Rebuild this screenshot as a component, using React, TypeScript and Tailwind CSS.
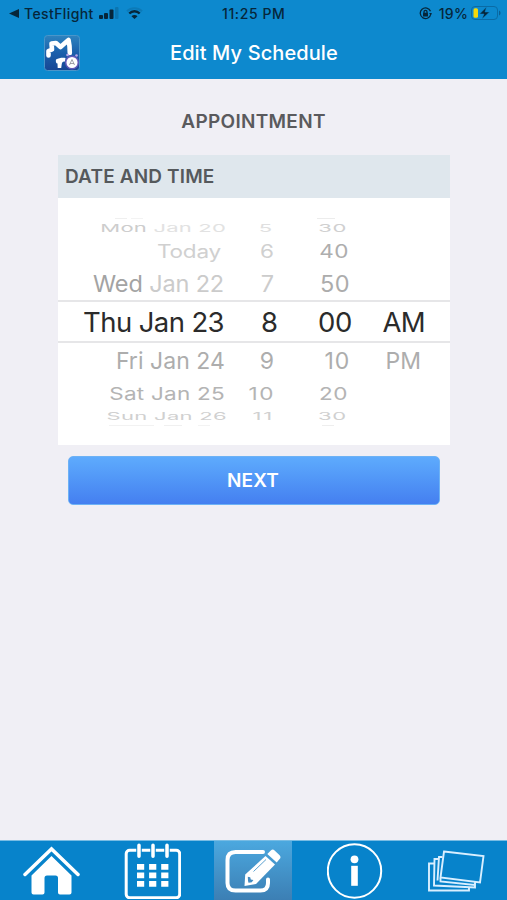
import clsx from 'clsx';
import type { ReactNode } from 'react';

interface WheelRow {
  day: ReactNode;
  hour: string;
  minute: string;
  period?: string;
  row: string;
  dayClass: string;
  hourClass: string;
  minuteClass: string;
  periodClass?: string;
}

// The wheel flattens and fades towards its top and bottom edges
const ROWS: WheelRow[] = [
  {
    day: <>Mon <span className="text-[#e2e2e2]">Jan 20</span></>,
    hour: '5',
    minute: '30',
    row: 'h-4 text-[22px]',
    dayClass: 'text-[#cdcdcd] scale-y-[0.5] mr-[-2px] tracking-[0.2px]',
    hourClass: 'text-[#e0e0e0] scale-y-[0.5] mr-[6px]',
    minuteClass: 'text-[#d0d0d0] scale-y-[0.5] mr-[6px] tracking-[0.6px]',
  },
  {
    day: 'Today',
    hour: '6',
    minute: '40',
    row: 'h-[29px] pt-[3px] text-[22.5px]',
    dayClass: 'text-[#d0d0d0] scale-y-[0.8] mr-[3px] tracking-[-0.2px]',
    hourClass: 'text-[#d0d0d0] scale-y-[0.8] mr-[4px]',
    minuteClass: 'text-[#aeaeae] scale-y-[0.8] mr-[4px] tracking-[0.5px]',
  },
  {
    day: <>Wed <span className="text-[#cbcbcb]">Jan 22</span></>,
    hour: '7',
    minute: '50',
    row: 'h-9 pt-[2px] text-[23.5px]',
    dayClass: 'text-[#a3a3a3] scale-y-[0.96] tracking-[-0.15px]',
    hourClass: 'text-[#cccccc] scale-y-[0.96] mr-[4px]',
    minuteClass: 'text-[#acacac] scale-y-[0.96] mr-[3px] tracking-[0.5px]',
  },
  {
    day: 'Thu Jan 23',
    hour: '8',
    minute: '00',
    period: 'AM',
    row: 'h-[42px] pt-px text-[27.5px] text-[#2b2b2b]',
    dayClass: 'tracking-[-0.6px]',
    hourClass: '',
    minuteClass: 'tracking-[-0.3px] mr-px',
    periodClass: 'tracking-[-0.6px] mr-px',
  },
  {
    day: 'Fri Jan 24',
    hour: '9',
    minute: '10',
    period: 'PM',
    row: 'h-[35px] pt-[2px] text-[23px] text-[#adadad]',
    dayClass: 'mr-[-1px] tracking-[0.05px]',
    hourClass: 'mr-[4px]',
    minuteClass: 'mr-[3px] tracking-[0.8px]',
    periodClass: 'mr-[5px]',
  },
  {
    day: 'Sat Jan 25',
    hour: '10',
    minute: '20',
    row: 'h-[30px] pt-[2px] text-[22.5px] text-[#b4b4b4]',
    dayClass: 'scale-y-[0.78] tracking-[0.25px] mr-[-1px]',
    hourClass: 'scale-y-[0.78] mr-[3px] tracking-[1.6px]',
    minuteClass: 'scale-y-[0.78] mr-[5px] tracking-[0.5px]',
  },
  {
    day: 'Sun Jan 26',
    hour: '11',
    minute: '30',
    row: 'h-4 text-[22px] text-[#d0d0d0]',
    dayClass: 'scale-y-[0.48] mr-[-3px] tracking-[0.3px]',
    hourClass: 'scale-y-[0.48] mr-[4px] tracking-[1.8px]',
    minuteClass: 'scale-y-[0.48] mr-[6px] tracking-[0.8px]',
  },
];

const cell = 'inline-block whitespace-nowrap';

function PickerRow({ item }: { item: WheelRow }) {
  return (
    <div className={clsx('flex items-center leading-none', item.row)}>
      <div className="flex w-[166px] shrink-0 justify-end">
        <span className={clsx(cell, item.dayClass)}>{item.day}</span>
      </div>
      <div className="flex w-[54px] shrink-0 justify-end">
        <span className={clsx(cell, item.hourClass)}>{item.hour}</span>
      </div>
      <div className="flex w-[75px] shrink-0 justify-end">
        <span className={clsx(cell, item.minuteClass)}>{item.minute}</span>
      </div>
      <div className="flex w-[73px] shrink-0 justify-end">
        <span className={clsx(cell, item.periodClass)}>{item.period}</span>
      </div>
    </div>
  );
}

function DateTimePicker() {
  return (
    <div className="relative h-[247px] bg-white font-normal">
      {/* slivers of the rows that roll out of sight */}
      <div className="flex h-[22px] items-end pb-px">
        <span className="ml-[57px] h-px w-3 bg-[#efefef]" />
        <span className="ml-1 h-px w-3 bg-[#f3f3f3]" />
        <span className="ml-[174px] h-px w-[18px] bg-[#ececec]" />
      </div>
      {ROWS.map((item) => (
        <PickerRow key={item.hour} item={item} />
      ))}
      <div className="flex h-[3px] items-center">
        <span className="ml-[51px] h-px w-[45px] bg-[#f2f2f2]" />
        <span className="ml-[10px] h-px w-[18px] bg-[#f0f0f0]" />
        <span className="ml-[16px] h-px w-3 bg-[#f3f3f3]" />
        <span className="ml-[112px] h-px w-3 bg-[#eeeeee]" />
      </div>
      <div className="pointer-events-none absolute inset-x-0 top-[102px] h-[43px] border-y-2 border-[#e6e6e8]" />
    </div>
  );
}

function StatusBar() {
  return (
    <div className="flex h-[26px] items-center text-[14px] font-medium text-[#06263a]">
      <div className="flex w-[222px] items-center pl-[9px]">
        <svg className="h-[9px] w-[10px]" viewBox="0 0 10 9" fill="currentColor">
          <path d="M0 4.5 10 0v9z" />
        </svg>
        <span className="ml-[5px] w-[70px] tracking-[0.4px]">TestFlight</span>
        <svg className="ml-[5px] h-3 w-[21px]" viewBox="0 0 21 12" fill="currentColor">
          <rect x="0" y="8" width="4" height="4" rx="1" />
          <rect x="5" y="6" width="4" height="6" rx="1" />
          <rect x="10.500" y="2.500" width="4" height="9.500" rx="1" />
          <rect x="16" y="0" width="3.500" height="12" rx="1" opacity="0.2" />
        </svg>
        <svg className="ml-[6px] h-3 w-[17px]" viewBox="0 0 17 12" fill="none" stroke="currentColor" strokeWidth="2">
          <path d="M1 4.200a10.800 10.800 0 0 1 15 0" opacity="0.15" />
          <path d="M3.300 6.500a7.200 7.200 0 0 1 10.400 0" strokeWidth="2.400" />
          <path d="M8.500 12 5.500 9.200a4.200 4.200 0 0 1 6 0z" fill="currentColor" stroke="none" />
        </svg>
      </div>
      <span className="w-[66px] whitespace-nowrap tracking-[0.6px]">11:25 PM</span>
      <div className="ml-auto flex items-center pr-[6px]">
        <svg className="h-[13px] w-[13px]" viewBox="0 0 13 13" fill="none" stroke="currentColor" strokeWidth="1.300">
          <path d="M11.500 4.300A5.300 5.300 0 1 0 11.800 7" />
          <path d="m10 6 1.800 2L13 6z" fill="currentColor" stroke="none" />
          <rect x="4" y="5.800" width="5" height="3.600" rx="0.500" fill="currentColor" stroke="none" />
          <path d="M5 6V4.800a1.500 1.500 0 0 1 3 0V6" />
        </svg>
        <span className="ml-[7px] tracking-[0.2px]">19%</span>
        <svg className="ml-[3px] h-[14px] w-[30px]" viewBox="0 0 30 14">
          <rect x="0.500" y="0.500" width="26" height="13" rx="3.500" fill="none" stroke="#0a6ba5" />
          <path d="M28 4.500c2 .8 2 4.200 0 5z" fill="#0a5f94" />
          <rect x="2.500" y="2.200" width="4.500" height="9.600" rx="1.500" fill="#f5d90a" />
          <path d="M15.500 1 8.500 8h4.500l-2 5L18.500 6h-4.500z" fill="#06263a" stroke="#0d87cc" strokeWidth="0.500" />
        </svg>
      </div>
    </div>
  );
}

function AppLogo() {
  return (
    <svg className="h-9 w-9" viewBox="0 0 36 36">
      <defs>
        <linearGradient id="logo" x1="0" y1="0" x2="0" y2="1">
          <stop offset="0" stopColor="#2d83bf" />
          <stop offset="0.5" stopColor="#1a5fab" />
          <stop offset="1" stopColor="#174694" />
        </linearGradient>
      </defs>
      <rect x="0.500" y="0.500" width="35" height="35" rx="3" fill="url(#logo)" stroke="#4a95c9" />
      <path
        d="M4.500 20.500v-4.500l3.500-1.500-.5-6 4.500-.5 4.500 4 4.500-4 3.500-3 1 6 .3 7"
        fill="none"
        stroke="#fff"
        strokeWidth="4.600"
        strokeLinejoin="round"
        strokeLinecap="round"
      />
      <path d="M12 24.500c3-1.500 6-2 9.500-1.500l-.5 3.500c-2-.5-3 .5-3.300 3l-.5 3.500h-3.500l-.2-4.500c-1.500 0-2-2-1.500-4z" fill="#fff" />
      <circle cx="23.500" cy="20" r="1.300" fill="#b9a5ea" />
      <circle cx="32.500" cy="20.500" r="1.300" fill="#b9a5ea" />
      <circle cx="28" cy="27.500" r="6.300" fill="#fff" stroke="#6259b8" strokeWidth="1.500" />
      <path d="m25.500 30 2.500-5.500 2.500 5.500M26 28.500h4" fill="none" stroke="#8b8b95" strokeWidth="0.800" />
    </svg>
  );
}

function HomeIcon() {
  return (
    <svg className="h-[50px] w-[58px]" viewBox="0 0 58 50" fill="#fff">
      <path d="M3 28.500 29.500 3 56 28.500" fill="none" stroke="#fff" strokeWidth="3.500" strokeLinecap="round" />
      <path d="M29.500 10 9.500 29.500V46.500q0 2 2 2h9q2 0 2-2V32q0-2.500 2.500-2.500h8.500q2.500 0 2.500 2.500v14.500q0 2 2 2h9.500q2 0 2-2v-17z" />
    </svg>
  );
}

function CalendarIcon() {
  return (
    <svg className="h-14 w-[57px]" viewBox="0 0 57 56" fill="none" stroke="#fff">
      <rect x="2.200" y="7.300" width="53.500" height="47.500" rx="3.500" strokeWidth="3" />
      <path d="M15 1.500v12M29 1.500v12M43 1.500v12" stroke="#0783cb" strokeWidth="5.500" />
      <path d="M15 2.300v11M29 2.300v11M43 2.300v11" strokeWidth="3.500" strokeLinecap="round" />
      <path d="M13 23.800h7.200m4.900 0h7.200m4.900 0h7.200M13 32.300h7.200m4.900 0h7.200m4.900 0h7.200M13 40.800h7.200m4.900 0h7.200m4.900 0h7.200" strokeWidth="5.700" />
    </svg>
  );
}

function EditIcon() {
  return (
    <svg className="h-[46px] w-[56px]" viewBox="0 0 56 46">
      <path
        d="M38 4H10.500Q2.500 4 2.500 12v23q0 7.500 8 7.500h25q7.500 0 7.500-7.500V31.500"
        fill="none"
        stroke="#fff"
        strokeWidth="4"
        strokeLinecap="round"
      />
      <path d="m40.500 8 9.500 8.500L31 36l-11.500 2 .7-11.500z" fill="#fff" />
      <path d="m42.300 6 3.500-3.500q2-1.800 3.800 0l5 4.800q1.800 1.900 0 3.800L51.700 14.500z" fill="#fff" />
      <path d="m28.500 23.500 12.500-12" stroke="#4a97cb" strokeWidth="0.900" />
      <path d="m22.800 28.800 2.400.4.600 2.200 2.600.6-1.600 2.300-3.300.4-.5-2z" fill="#438bc1" />
    </svg>
  );
}

function InfoIcon() {
  return (
    <svg className="h-14 w-14" viewBox="0 0 56 56" fill="#fff">
      <circle cx="27.500" cy="28" r="26.700" fill="none" stroke="#fff" strokeWidth="2" />
      <circle cx="27.500" cy="16.300" r="3.900" />
      <rect x="24.200" y="22.800" width="6.600" height="20" />
    </svg>
  );
}

function PhotosIcon() {
  return (
    <svg className="h-[42px] w-[58px]" viewBox="0 0 58 42" fill="none" stroke="#d9efff" strokeWidth="1.900">
      <path d="M7 13.500H2V40.500h40V37" />
      <path d="M11 9H7.500L7 35.500l41 2v-4.500" />
      <path d="M15.500 7H12L10.500 30.500" />
      <path d="M13.500 28v3.500L47.500 35l1-4" />
      <path d="m17 1.500 39.500 4.500-3.500 26.500L13.500 27.500z" fill="#0783cb" />
    </svg>
  );
}

function TabBar() {
  return (
    <nav className="grid h-[60px] grid-cols-[103px_100px_99px_104px_101px] border-t border-[#78bce4] bg-[#0783cb]">
      <div className="flex items-start pl-[22px] pt-[5px]"><HomeIcon /></div>
      <div className="flex items-start pl-[21px] pt-[2px]"><CalendarIcon /></div>
      <div className="flex items-start pl-[11px]">
        <div className="flex h-[59px] w-[78px] items-start bg-linear-to-b from-[#4ba8df] to-[#3c7fb4] pl-[11px] pt-[7px]">
          <EditIcon />
        </div>
      </div>
      <div className="flex items-start pl-[25px] pt-[2px]"><InfoIcon /></div>
      <div className="flex items-start pl-[21px] pt-[9px]"><PhotosIcon /></div>
    </nav>
  );
}

export default function App() {
  return (
    <div className="flex h-[900px] w-[507px] flex-col overflow-hidden bg-[#f0eff5] font-['Inter',sans-serif]">
      <header className="h-[79px] shrink-0 bg-[#0d89ce]">
        <StatusBar />
        <div className="flex h-[53px] items-center pl-[44px]">
          <AppLogo />
          <h1 className="ml-[90px] text-[20px] font-medium tracking-[0.1px] whitespace-nowrap text-white">
            Edit My Schedule
          </h1>
        </div>
      </header>

      <main className="flex-1 px-[58px] pt-[29px]">
        <h2 className="text-center text-[19px] leading-7 font-semibold tracking-[0.3px] text-[#5a5a5d]">
          APPOINTMENT
        </h2>
        <section className="mt-[19px] w-[392px]">
          <div className="flex h-[43px] items-center bg-[#dfe7ed] pt-[2px] pl-[7px] text-[19px] font-semibold tracking-[0.15px] text-[#55595c]">
            DATE AND TIME
          </div>
          <DateTimePicker />
        </section>
        <button className="mt-[11px] ml-[10px] h-[49px] w-[372px] rounded-[5px] border border-[#6db2f5] bg-linear-to-b from-[#5eabfd] to-[#457ff0] pt-[2px] pr-[2px] text-[19px] font-semibold tracking-[0.2px] text-white">
          NEXT
        </button>
      </main>

      <TabBar />
    </div>
  );
}
